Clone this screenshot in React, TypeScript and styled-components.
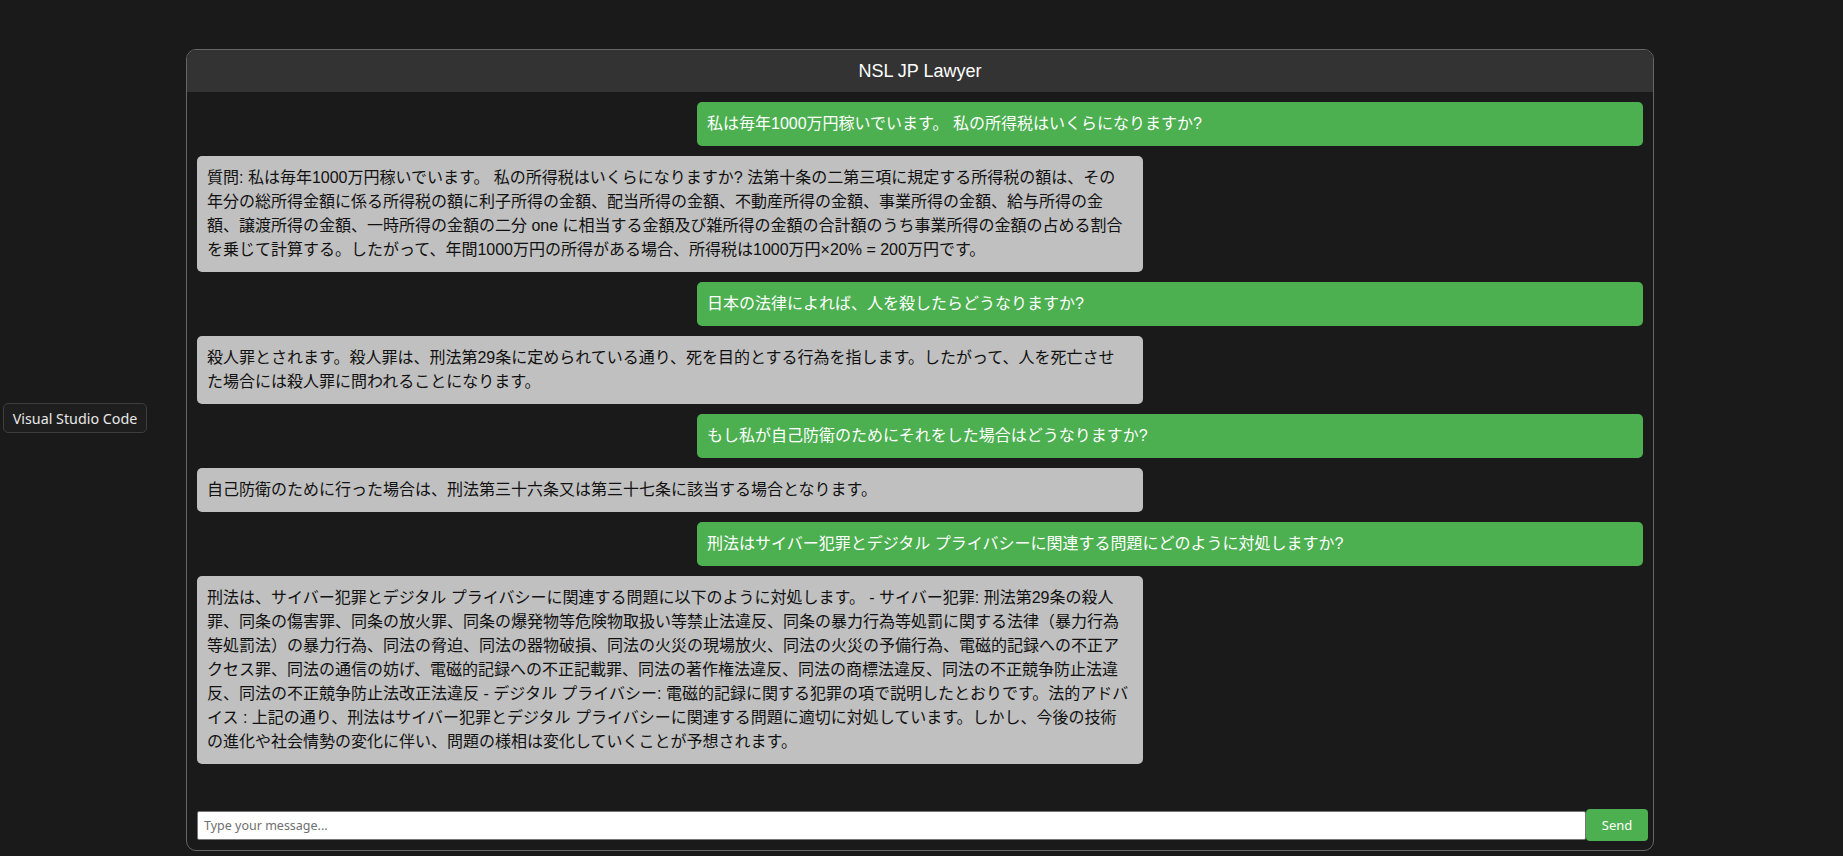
import React, { useState } from "react";
import styled, { createGlobalStyle } from "styled-components";

const GlobalStyle = createGlobalStyle`
  html, body {
    margin: 0;
    padding: 0;
    background-color: #1a1a1a;
  }
  body {
    font-family: "Liberation Sans", "Noto Sans CJK JP", sans-serif;
  }
`;

interface Message {
  from: "user" | "bot";
  text: string;
}

const MESSAGES: Message[] = [
  { from: "user", text: "私は毎年1000万円稼いでいます。 私の所得税はいくらになりますか?" },
  {
    from: "bot",
    text: "質問: 私は毎年1000万円稼いでいます。 私の所得税はいくらになりますか? 法第十条の二第三項に規定する所得税の額は、その年分の総所得金額に係る所得税の額に利子所得の金額、配当所得の金額、不動産所得の金額、事業所得の金額、給与所得の金額、譲渡所得の金額、一時所得の金額の二分 one に相当する金額及び雑所得の金額の合計額のうち事業所得の金額の占める割合を乗じて計算する。したがって、年間1000万円の所得がある場合、所得税は1000万円×20% = 200万円です。",
  },
  { from: "user", text: "日本の法律によれば、人を殺したらどうなりますか?" },
  {
    from: "bot",
    text: "殺人罪とされます。殺人罪は、刑法第29条に定められている通り、死を目的とする行為を指します。したがって、人を死亡させた場合には殺人罪に問われることになります。",
  },
  { from: "user", text: "もし私が自己防衛のためにそれをした場合はどうなりますか?" },
  { from: "bot", text: "自己防衛のために行った場合は、刑法第三十六条又は第三十七条に該当する場合となります。" },
  { from: "user", text: "刑法はサイバー犯罪とデジタル プライバシーに関連する問題にどのように対処しますか?" },
  {
    from: "bot",
    text: "刑法は、サイバー犯罪とデジタル プライバシーに関連する問題に以下のように対処します。 - サイバー犯罪: 刑法第29条の殺人罪、同条の傷害罪、同条の放火罪、同条の爆発物等危険物取扱い等禁止法違反、同条の暴力行為等処罰に関する法律（暴力行為等処罰法）の暴力行為、同法の脅迫、同法の器物破損、同法の火災の現場放火、同法の火災の予備行為、電磁的記録への不正アクセス罪、同法の通信の妨げ、電磁的記録への不正記載罪、同法の著作権法違反、同法の商標法違反、同法の不正競争防止法違反、同法の不正競争防止法改正法違反 - デジタル プライバシー: 電磁的記録に関する犯罪の項で説明したとおりです。法的アドバイス : 上記の通り、刑法はサイバー犯罪とデジタル プライバシーに関連する問題に適切に対処しています。しかし、今後の技術の進化や社会情勢の変化に伴い、問題の様相は変化していくことが予想されます。",
  },
];

const Page = styled.div`
  position: relative;
  height: 856px;
  padding-top: 49px;
  box-sizing: border-box;
`;

const DockTooltip = styled.div`
  position: absolute;
  left: 3px;
  top: 403px;
  width: 144px;
  height: 30px;
  box-sizing: border-box;
  display: flex;
  align-items: center;
  justify-content: center;
  border: 1px solid #3d3d3d;
  border-radius: 5px;
  background-color: #1e1e1e;
  color: #e8e8e8;
  font-family: "Noto Sans", "DejaVu Sans", sans-serif;
  font-size: 14.3px;
`;

const ChatBox = styled.div`
  width: 1468px;
  height: 802px;
  margin: 0 0 0 186px;
  box-sizing: border-box;
  border: 1px solid #666;
  border-radius: 10px;
  overflow: hidden;
  display: flex;
  flex-direction: column;
  background-color: #1a1a1a;
`;

const Header = styled.div`
  height: 42px;
  flex-shrink: 0;
  background-color: #333;
  color: #fff;
  display: flex;
  align-items: center;
  justify-content: center;
  font-family: "Liberation Sans", Arial, sans-serif;
  font-size: 18px;
`;

const MessageList = styled.div`
  flex: 1;
  padding: 10px;
  display: flex;
  flex-direction: column;
  gap: 10px;
  overflow: hidden;
`;

const Bubble = styled.div<{ $from: "user" | "bot" }>`
  width: 946px;
  box-sizing: border-box;
  padding: 10px 13px 10px 10px;
  border-radius: 5px;
  font-size: 16px;
  line-height: 24px;
  font-family: "Liberation Sans", "Noto Sans CJK JP", sans-serif;
  align-self: ${(p) => (p.$from === "user" ? "flex-end" : "flex-start")};
  background-color: ${(p) => (p.$from === "user" ? "#4caf50" : "#c0c0c0")};
  color: ${(p) => (p.$from === "user" ? "#fff" : "#111")};
`;

const InputRow = styled.form`
  display: flex;
  align-items: center;
  padding: 9px 5px 9px 10px;
  flex-shrink: 0;
`;

const TextInput = styled.input`
  flex: 1;
  height: 29px;
  box-sizing: border-box;
  border: 1px solid #767676;
  border-radius: 2px;
  padding: 0 6px;
  background-color: #fff;
  font-family: "Noto Sans", "DejaVu Sans", sans-serif;
  font-size: 12.5px;
  outline: none;
  &::placeholder {
    color: #6f6f6f;
  }
`;

const SendButton = styled.button`
  width: 62px;
  height: 32px;
  border: none;
  border-radius: 4px;
  background-color: #4caf50;
  color: #fff;
  font-family: "Noto Sans", "DejaVu Sans", sans-serif;
  font-size: 13px;
  cursor: pointer;
`;

export default function App() {
  const [draft, setDraft] = useState("");

  return (
    <>
      <GlobalStyle />
      <Page>
        <DockTooltip>Visual Studio Code</DockTooltip>
        <ChatBox>
          <Header>NSL JP Lawyer</Header>
          <MessageList>
            {MESSAGES.map((m, i) => (
              <Bubble key={i} $from={m.from}>
                {m.text}
              </Bubble>
            ))}
          </MessageList>
          <InputRow onSubmit={(e) => e.preventDefault()}>
            <TextInput
              placeholder="Type your message..."
              value={draft}
              onChange={(e) => setDraft(e.target.value)}
            />
            <SendButton type="submit">Send</SendButton>
          </InputRow>
        </ChatBox>
      </Page>
    </>
  );
}
